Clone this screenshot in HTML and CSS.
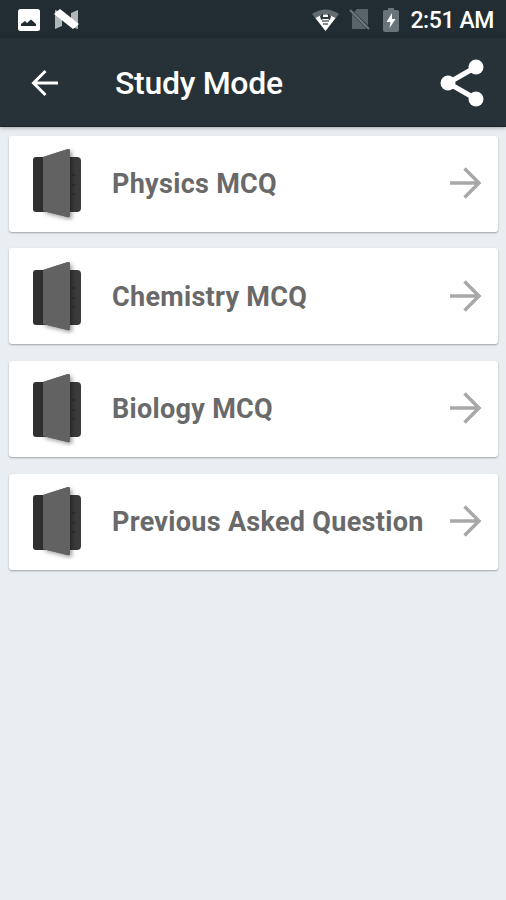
FILE: index.html
```html
<!DOCTYPE html>
<html>
    <head>
        <meta charset="UTF-8">
        <title>Study Mode</title>
        <link rel="stylesheet" href="styles.css">
    </head>
    <body>
        <!-- shared icons -->
        <svg class="defs" width="0" height="0">
            <symbol id="book" viewBox="0 0 56 76">
                <rect x="4" y="12" width="20" height="55" rx="3" fill="#303030"/>
                <rect x="30" y="12" width="22" height="55" rx="4" fill="#3b3b3b"/>
                <path class="coverShadow" d="M14 12L39 4Q41 3.500 41 6V70Q41 73 38.500 72L14 66Z"/>
                <path d="M43 30h3M43 40h3M43 49h3" stroke="#2a2a2a" stroke-width="2"/>
                <path d="M14 12L39 4Q41 3.500 41 6V70Q41 73 38.500 72L14 66Z" fill="#626262"/>
            </symbol>
            <symbol id="next" viewBox="0 0 34 34">
                <path d="M2 17H31M16.500 2.500L31 17L16.500 31.500" fill="none" stroke="#a8a8a8" stroke-width="3.500"/>
            </symbol>
        </svg>

        <div class="statusBar">
            <svg class="picture" width="22" height="22" viewBox="0 0 22 22">
                <rect width="22" height="22" rx="2.500" fill="#fff"/>
                <path d="M3 17V15L7 12L9 14L13 10.500L18 15V17Z" fill="#222d33"/>
            </svg>
            <svg class="nougat" width="25" height="21" viewBox="0 0 25 21">
                <path d="M1 1L8 3V17L1 20ZM24 1L17 4V18L24 20Z" fill="#b0b5b7"/>
                <path d="M0 5L6 0L25 15L19 20Z" fill="#fff"/>
            </svg>
            <div class="statusRight">
                <svg class="wifi" width="27" height="22" viewBox="0 0 27 22">
                    <path d="M0 5Q13.500-4 27 5L13.500 22Z" fill="#646c70"/>
                    <path d="M3.500 9Q13.500 2 23.500 9L13.500 22Z" fill="#fff"/>
                    <path d="M8 7L11 4.500V8H16V4.500L19 7L18 11L16 10H11L9 11Z" fill="#303a3f"/>
                    <path d="M10 12H17M11 15H16" stroke="#59636a" stroke-width="1.500"/>
                </svg>
                <svg class="sim" width="21" height="23" viewBox="0 0 21 23">
                    <path d="M8 1H19V17.500L5 4ZM3 6L17 20Q17 21 16 21H4Q3 21 3 20Z" fill="#59636a"/>
                    <path d="M1 2L20 21" stroke="#707980" stroke-width="2"/>
                </svg>
                <svg class="battery" width="16" height="24" viewBox="0 0 16 24">
                    <path d="M5 0H11V2H14Q16 2 16 4V22Q16 24 14 24H2Q0 24 0 22V4Q0 2 2 2H5Z" fill="#68737a"/>
                    <path d="M9 5L3.500 14H7.500L6.500 20L12.500 11H9Z" fill="#fff"/>
                </svg>
                <span class="clock">2:51 AM</span>
            </div>
        </div>

        <div class="header">
            <svg class="back" width="28" height="28" viewBox="0 0 28 28">
                <path d="M27 14H3M14.500 2L2.500 14L14.500 26" fill="none" stroke="#fff" stroke-width="3"/>
            </svg>
            <div class="title">Study Mode</div>
            <svg class="share" width="44" height="48" viewBox="0 0 44 48">
                <path d="M36 8L8 24L36 40" fill="none" stroke="#fff" stroke-width="5"/>
                <circle cx="8" cy="24" r="7.500" fill="#fff"/>
                <circle cx="36" cy="8" r="7.500" fill="#fff"/>
                <circle cx="36" cy="40" r="7.500" fill="#fff"/>
            </svg>
        </div>

        <div class="list">
            <div class="item">
                <svg class="book"><use href="#book"/></svg>
                <span class="label">Physics MCQ</span>
                <svg class="next"><use href="#next"/></svg>
            </div>
            <div class="item">
                <svg class="book"><use href="#book"/></svg>
                <span class="label">Chemistry MCQ</span>
                <svg class="next"><use href="#next"/></svg>
            </div>
            <div class="item">
                <svg class="book"><use href="#book"/></svg>
                <span class="label">Biology MCQ</span>
                <svg class="next"><use href="#next"/></svg>
            </div>
            <div class="item">
                <svg class="book"><use href="#book"/></svg>
                <span class="label">Previous Asked Question</span>
                <svg class="next"><use href="#next"/></svg>
            </div>
        </div>
    </body>
</html>
```

FILE: styles.css
```css
html, body {
    margin: 0px;
    padding: 0px;
}

body {
    min-height: 900px;
    background-color: #e8eef2;
    font-family: Roboto, sans-serif;
}

svg {
    display: block;
    flex: none;
}

.defs {
    display: none;
}

.statusBar {
    display: flex;
    align-items: center;
    box-sizing: border-box;
    height: 38px;
    padding: 1px 12px 0px 18px;
    background-color: #222d33;
}

.nougat {
    margin-left: 14px;
}

.statusRight {
    display: flex;
    align-items: center;
    margin-left: auto;
}

.sim {
    margin-left: 10px;
}

.battery {
    margin-left: 13px;
}

.clock {
    margin-left: 11px;
    padding-top: 1px;
    color: #fff;
    font-size: 23px;
    font-weight: 500;
    line-height: 37px;
    letter-spacing: -0.4px;
    white-space: nowrap;
}

.header {
    display: flex;
    align-items: center;
    box-sizing: border-box;
    height: 89px;
    padding: 1px 22px 0px 31px;
    background-color: #263238;
    border-bottom: 1px solid #1b2226;
    box-shadow: 0px 1px 4px rgba(0, 0, 0, 0.3);
}

.title {
    margin-left: 56px;
    color: #fff;
    font-size: 32px;
    font-weight: 500;
    line-height: 40px;
    letter-spacing: -0.3px;
    white-space: nowrap;
}

.share {
    margin-left: auto;
}

.list {
    display: flex;
    flex-direction: column;
    gap: 16.7px;
    padding: 8.6px 8px 0px 9px;
}

.item {
    display: flex;
    align-items: center;
    box-sizing: border-box;
    height: 96px;
    padding: 0px 16px 1px 20px;
    background-color: #fff;
    border-radius: 3px;
    box-shadow: 0px 1px 2px rgba(0, 0, 0, 0.32);
}

.book {
    width: 56px;
    height: 76px;
}

.coverShadow {
    fill: #626262;
    filter: drop-shadow(2px 2px 2px rgba(0, 0, 0, 0.4));
}

.label {
    margin-left: 27px;
    padding-top: 2px;
    color: #696969;
    font-size: 27px;
    font-weight: 700;
    line-height: 36px;
    letter-spacing: 0.3px;
    white-space: nowrap;
}

.next {
    width: 34px;
    height: 34px;
    margin-left: auto;
}
```
